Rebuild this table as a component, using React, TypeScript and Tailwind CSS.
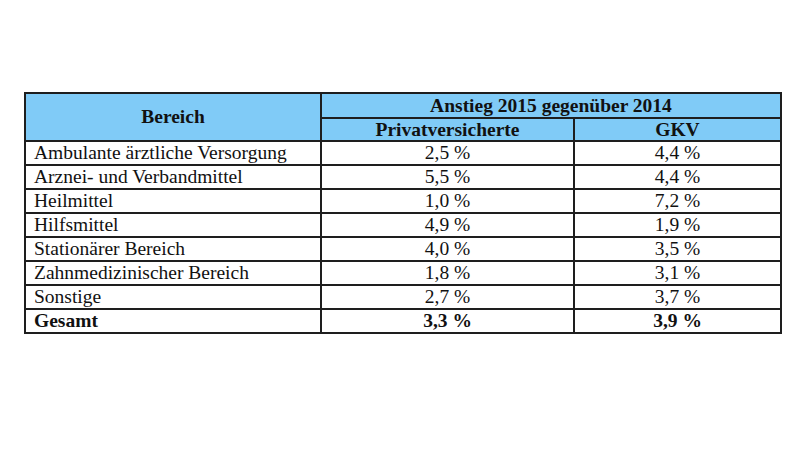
import React from "react";

const rows: [string, string, string][] = [
  ["Ambulante ärztliche Versorgung", "2,5 %", "4,4 %"],
  ["Arznei- und Verbandmittel", "5,5 %", "4,4 %"],
  ["Heilmittel", "1,0 %", "7,2 %"],
  ["Hilfsmittel", "4,9 %", "1,9 %"],
  ["Stationärer Bereich", "4,0 %", "3,5 %"],
  ["Zahnmedizinischer Bereich", "1,8 %", "3,1 %"],
  ["Sonstige", "2,7 %", "3,7 %"],
];

export default function App() {
  const font = { fontFamily: '"Liberation Serif", "Times New Roman", serif' };
  return (
    <div className="w-[800px] h-[451px] bg-white pt-[92px] pl-[24px]" style={font}>
      <table className="border-collapse border-2 border-[#1e1e1e] text-[19.5px] leading-none text-[#111]">
        <colgroup>
          <col className="w-[296px]" />
          <col className="w-[253px]" />
          <col className="w-[207px]" />
        </colgroup>
        <tbody>
          <tr className="h-[25px] bg-[#80cbf7]">
            <td rowSpan={2} className="border-2 border-[#1e1e1e] text-center font-bold">Bereich</td>
            <td colSpan={2} className="border-2 border-[#1e1e1e] text-center font-bold">Anstieg 2015 gegenüber 2014</td>
          </tr>
          <tr className="h-[23px] bg-[#80cbf7]">
            <td className="border-2 border-[#1e1e1e] text-center font-bold">Privatversicherte</td>
            <td className="border-2 border-[#1e1e1e] text-center font-bold">GKV</td>
          </tr>
          {rows.map((r) => (
            <tr key={r[0]} className="h-[24px]">
              <td className="border-2 border-[#1e1e1e] pl-[8px]">{r[0]}</td>
              <td className="border-2 border-[#1e1e1e] text-center">{r[1]}</td>
              <td className="border-2 border-[#1e1e1e] text-center">{r[2]}</td>
            </tr>
          ))}
          <tr className="h-[24px] font-bold">
            <td className="border-2 border-[#1e1e1e] pl-[8px]">Gesamt</td>
            <td className="border-2 border-[#1e1e1e] text-center">3,3 %</td>
            <td className="border-2 border-[#1e1e1e] text-center">3,9 %</td>
          </tr>
        </tbody>
      </table>
    </div>
  );
}
